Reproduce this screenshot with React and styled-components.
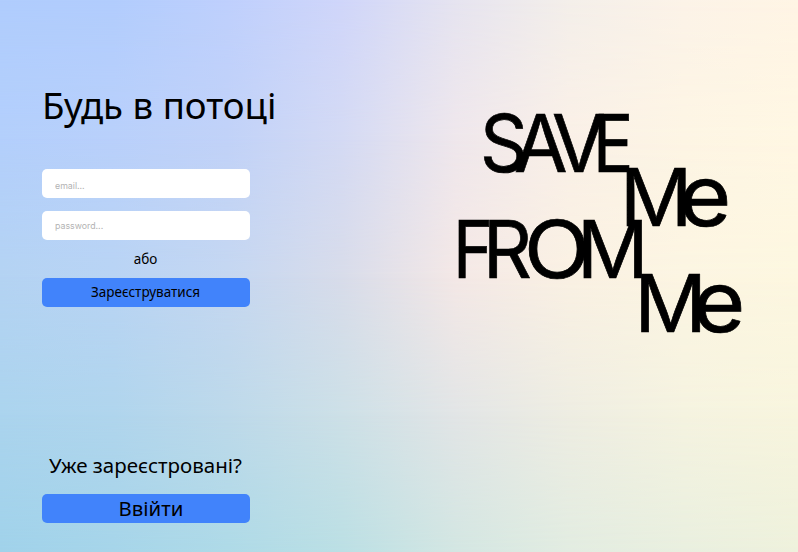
import React from "react";
import styled, { createGlobalStyle } from "styled-components";

const GlobalStyle = createGlobalStyle`
  *, *::before, *::after { box-sizing: border-box; }
  body { margin: 0; overflow: hidden; }
`;

const Page = styled.main`
  display: grid;
  width: 798px;
  height: 552px;
  overflow: hidden;
  font-family: "Noto Sans", sans-serif;
  color: #000;
`;

const Wash = styled.div`
  grid-area: 1 / 1;
  background: linear-gradient(90deg, ${(p) => p.$colors.join(", ")});
  mask-image: ${(p) =>
    p.$to ? `linear-gradient(180deg, transparent ${p.$from}%, #000 ${p.$to}%)` : "none"};
`;

const Content = styled.div`
  grid-area: 1 / 1;
  z-index: 1;
  display: flex;
`;

const Panel = styled.section`
  width: 456px;
  padding: 82px 0 0 42px;
  display: flex;
  flex-direction: column;
`;

const Title = styled.h1`
  margin: 0;
  font-size: 36.6px;
  line-height: 47px;
  font-weight: 400;
  white-space: nowrap;
`;

const Form = styled.form`
  display: flex;
  flex-direction: column;
  width: 208px;
  margin-top: 40px;
`;

const Field = styled.input`
  height: 29px;
  margin: 0 0 13.3px;
  padding: ${(p) => p.$pad};
  border: 0;
  border-radius: 5px;
  background: #fff;
  font: 400 8.8px/12px "Inter", sans-serif;
  outline: none;
  &::placeholder { color: #b3b3b3; opacity: 1; }
`;

const Divider = styled.span`
  height: 38px;
  margin-top: -13.6px;
  padding-right: 1px;
  font-size: 13.5px;
  line-height: 39px;
  text-align: center;
`;

const Button = styled.button`
  width: 208px;
  height: 29px;
  padding: 0 ${(p) => p.$trail || 0}px 1px ${(p) => p.$lead || 0}px;
  border: 0;
  border-radius: 5px;
  background: #4183fb;
  color: #000;
  font: 400 ${(p) => p.$size}px/28px "Noto Sans", sans-serif;
`;

const Prompt = styled.p`
  width: 207px;
  margin: 143px 0 14px;
  font-size: 20.5px;
  line-height: 30px;
  text-align: center;
  white-space: nowrap;
`;

const Slogan = styled.div`
  display: flex;
  flex-direction: column;
  padding-top: 102.6px;
`;

const Line = styled.div`
  display: flex;
  height: ${(p) => p.$height}px;
  margin-left: ${(p) => p.$indent}px;
  font: 400 80px/80px "Inter", sans-serif;
  -webkit-text-stroke: 0.7px #000;
`;

const Letter = styled.span`
  flex: none;
  width: ${(p) => p.$advance}px;
  height: 80px;
  white-space: nowrap;
  transform: scale(${(p) => p.$x}, ${(p) => p.$y || 1});
  transform-origin: 0 86.4%;
`;

const washes = [
  { colors: ["#b0cdfd", "#b2cdfd", "#bfd0fd", "#d0d6fa", "#e6e4f0", "#f4efea", "#fcf3e8", "#fff5e5"] },
  { from: 0, to: 25, colors: ["#b3cffc", "#b9d0fb", "#c1d2f8", "#d4daf4", "#efe7ec", "#faf0e7", "#fdf5e4", "#fff7e3"] },
  { from: 25, to: 50, colors: ["#b4d3f3", "#b9d4f4", "#c5d7f1", "#d8dcea", "#f4e8e6", "#faf1e3", "#fcf5e2", "#fdf7e0"] },
  { from: 50, to: 75, colors: ["#abd4ee", "#b0d5ed", "#bdd9ea", "#cde0e7", "#e2e5e6", "#eeede2", "#f5f3e0", "#f8f5de"] },
  { from: 75, to: 100, colors: ["#a0d2ea", "#a6d5e9", "#aedae7", "#bbdfe4", "#d3e6e2", "#e2ece1", "#e9efdf", "#eef1dc"] },
];

const slogan = [
  { indent: 24.3, height: 54, letters: [["S", 33.7, 0.93], ["A", 38, 0.97], ["V", 41, 0.97], ["E", 40, 0.84]] },
  { indent: 164, height: 52.5, letters: [["M", 59, 1], ["e", 40, 1.12, 1.06]] },
  { indent: -2.7, height: 54, letters: [["F", 29.6, 0.85], ["R", 40.6, 0.95], ["O", 53.9, 1.08], ["M", 60, 0.99]] },
  { indent: 178.4, height: 54, letters: [["M", 59, 1], ["e", 40, 1.12, 1.06]] },
];

export default function App() {
  return (
    <Page>
      <GlobalStyle />
      {washes.map((w, i) => (
        <Wash key={i} $colors={w.colors} $from={w.from} $to={w.to} />
      ))}
      <Content>
        <Panel>
          <Title>Будь в потоці</Title>
          <Form>
            <Field type="email" placeholder="email..." $pad="4px 13px 0" />
            <Field type="password" placeholder="password..." $pad="0 13px 1px" />
            <Divider>або</Divider>
            <Button type="button" $size={13.5} $trail={1}>Зареєструватися</Button>
          </Form>
          <Prompt>Уже зареєстровані?</Prompt>
          <Button type="button" $size={20.4} $lead={10}>Ввійти</Button>
        </Panel>
        <Slogan>
          {slogan.map((line, i) => (
            <Line key={i} $indent={line.indent} $height={line.height}>
              {line.letters.map(([char, advance, x, y], j) => (
                <Letter key={j} $advance={advance} $x={x} $y={y}>{char}</Letter>
              ))}
            </Line>
          ))}
        </Slogan>
      </Content>
    </Page>
  );
}
